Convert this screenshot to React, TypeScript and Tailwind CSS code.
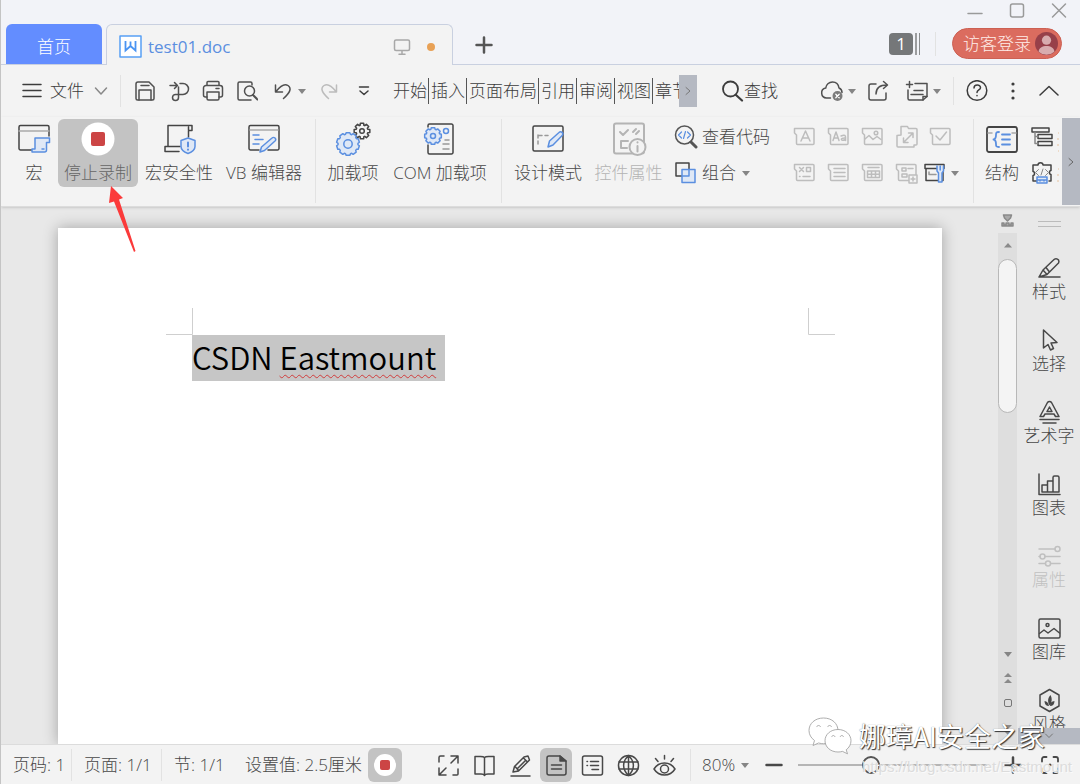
import React, { useState } from "react";

type IconProps = {
  w?: number;
  h?: number;
  className?: string;
  children: React.ReactNode;
};

const Icon: React.FC<IconProps> = ({ w = 22, h = 22, className = "", children }) => (
  <svg
    width={w}
    height={h}
    viewBox={`0 0 ${w} ${h}`}
    fill="none"
    stroke="currentColor"
    strokeWidth={1.5}
    strokeLinecap="round"
    strokeLinejoin="round"
    className={`shrink-0 ${className}`}
    aria-hidden="true"
  >
    {children}
  </svg>
);

const BLUE = "#5b8fe0";
const PALE = "#dfe8f6";

// closed gear outline with rounded teeth
function gearPath(cx: number, cy: number, outer: number, inner: number, teeth: number) {
  const points: string[] = [];
  const step = (Math.PI * 2) / teeth;
  for (let i = 0; i < teeth; i++) {
    const a = i * step - Math.PI / 2;
    [
      [-0.26, outer],
      [0.26, outer],
      [0.4, inner],
      [0.6, inner],
    ].forEach(([k, r]) => {
      const x = cx + Math.cos(a + step * k) * r;
      const y = cy + Math.sin(a + step * k) * r;
      points.push(`${x.toFixed(2)} ${y.toFixed(2)}`);
    });
  }
  return `M${points.join("L")}Z`;
}

const Caret = () => (
  <svg width="8" height="5" viewBox="0 0 8 5" className="shrink-0" aria-hidden="true">
    <path d="M0 0h8L4 5z" fill="#858585" />
  </svg>
);

const Divider = ({ className = "" }: { className?: string }) => (
  <span className={`w-px shrink-0 bg-[#e2e2e2] ${className}`} />
);

/* ---------- title bar ---------- */

const TitleBar = () => (
  <header className="flex h-[65px] shrink-0 bg-[#f2f3f8]">
    <div className="flex w-[105px] shrink-0 border-b border-[#c9d0e0] pt-6 pr-1 pl-[5px]">
      <button className="flex-1 rounded-t-md bg-[#638dff] pt-[6px] text-white">首页</button>
    </div>
    <div className="mt-6 flex w-[347px] shrink-0 items-center rounded-t-md border-x border-t border-[#c9d0e0] bg-[#f3f3f3] pt-[3px] pr-4 pl-3 text-[#5b8fe0]">
      <Icon w={24} h={24}>
        <rect x="1" y="1" width="21" height="21" fill="#fff" stroke="#58a0f5" />
        <path d="M6.500 6V15.500l5-4.500 5 4.500V6M11.500 6.500v4.500" stroke="#4a94f2" strokeWidth="1.800" strokeLinejoin="miter" strokeLinecap="butt" />
      </Icon>
      <span className="ml-[5px] flex-1 font-normal">test01.doc</span>
      <Icon w={18} h={18} className="mr-4 text-[#a8a8a8]">
        <rect x="1.500" y="2" width="15" height="10.500" rx="1.500" />
        <path d="M9 13v3M6 16.300h6" />
      </Icon>
      <span className="mr-[1px] size-2 rounded-full bg-[#e8a155]" />
    </div>
    <div className="flex min-w-0 flex-1 flex-col border-b border-[#c9d0e0] text-[#9a9a9a]">
      <div className="flex h-[22px] justify-end">
        <button className="flex w-[42px] justify-center" aria-label="最小化">
          <Icon w={16}>
            <path d="M1 13.500h14" />
          </Icon>
        </button>
        <button className="flex w-[42px] justify-center" aria-label="最大化">
          <Icon w={16}>
            <rect x="1.500" y="4" width="13" height="13" rx="2" />
          </Icon>
        </button>
        <button className="flex w-[42px] justify-center" aria-label="关闭">
          <Icon w={16}>
            <path d="M1.500 4l13 13M14.500 4l-13 13" />
          </Icon>
        </button>
      </div>
      <div className="flex flex-1 items-center pt-px pr-[18px] pl-[22px]">
        <button className="text-[#555]" aria-label="新建标签">
          <Icon w={18} h={20}>
            <path d="M1.500 11h15M9 3.500v15" strokeWidth="2.500" />
          </Icon>
        </button>
        <button className="ml-auto flex items-center gap-[2px]" aria-label="窗口 1">
          <span className="flex h-[22px] w-6 items-center justify-center rounded bg-[#757779] font-normal text-white">1</span>
          <span className="h-[22px] w-[2px] bg-[#9b9c9e]" />
          <span className="h-[22px] w-px bg-[#8a8c8e]" />
        </button>
        <Divider className="mr-4 ml-[15px] h-6" />
        <button className="flex h-[31px] items-center gap-1 rounded-full border border-[#cc6053] bg-[#db6c5f] pr-[3px] pl-[10px] text-[#ffeeea]">
          访客登录
          <svg width="23" height="23" viewBox="0 0 24 24" aria-hidden="true">
            <circle cx="12" cy="12" r="12" fill="#974049" />
            <circle cx="12" cy="8.500" r="4.800" fill="#d8acae" />
            <path d="M3.800 20.500c0-8 16.400-8 16.400 0A12 12 0 0 1 3.800 20.500z" fill="#d8acae" />
          </svg>
        </button>
      </div>
    </div>
  </header>
);

/* ---------- menu bar ---------- */

const quickTools = [
  {
    label: "保存",
    icon: (
      <>
        <path d="M4 2h11l5 5v11.500a1.500 1.500 0 0 1-1.500 1.500H3.500A1.500 1.500 0 0 1 2 18.500V4a2 2 0 0 1 2-2z" />
        <path d="M5 20V10h12v10M7 5.500h8" />
      </>
    ),
  },
  {
    label: "输出为PDF",
    icon: (
      <>
        <path d="M2 5.500h7M6.500 2.500l3 3-3 3" />
        <path d="M12 3.500h3a5 5 0 0 1 0 11H7.500a3 3 0 1 0 3 3V7" />
      </>
    ),
  },
  {
    label: "打印",
    icon: (
      <>
        <path d="M5 5V2.500a1 1 0 0 1 1-1h10a1 1 0 0 1 1 1V5M5 17H3.500A2 2 0 0 1 1.500 15V8a2.500 2.500 0 0 1 2.500-2.500h14A2.500 2.500 0 0 1 20.500 8v7a2 2 0 0 1-2 2H17" />
        <path d="M5 12h12v6.500a1.500 1.500 0 0 1-1.500 1.500h-9A1.500 1.500 0 0 1 5 18.500zM14 8.500h3" />
      </>
    ),
  },
  {
    label: "打印预览",
    icon: (
      <>
        <path d="M15 20H3.500A1.500 1.500 0 0 1 2 18.500v-15A1.500 1.500 0 0 1 3.500 2h11A1.500 1.500 0 0 1 16 3.500V5" />
        <circle cx="13.500" cy="11" r="5" />
        <path d="M17 15l4.500 4.500" strokeWidth="2" />
      </>
    ),
  },
];

const menuTabs = ["开始", "插入", "页面布局", "引用", "审阅", "视图", "章节"];

const MenuBar = () => (
  <div className="flex h-[52px] shrink-0 items-center bg-[#f3f3f3] pr-[13px] pl-[21px] text-[#3c3c3c]">
    <button className="flex items-center">
      <Icon w={20}>
        <path d="M1 4.500h18M1 10.500h18M1 16.500h18" />
      </Icon>
      <span className="mr-[10px] ml-2">文件</span>
      <Icon w={14} h={10} className="text-[#888]">
        <path d="M1.500 2L7 8l5.500-6" />
      </Icon>
    </button>
    <Divider className="mr-[7px] ml-3 h-8" />
    {quickTools.map((tool) => (
      <button key={tool.label} aria-label={tool.label} className="flex w-[34px] shrink-0 justify-center text-[#505050]">
        <Icon>{tool.icon}</Icon>
      </button>
    ))}
    <button aria-label="撤销" className="flex w-12 shrink-0 items-center justify-end gap-[5px] pr-[6px] text-[#505050]">
      <Icon w={20}>
        <path d="M2.500 5v7h7M3 11.500C8 5 12 3.500 15 5.500c4 3 2 7-4.500 13" />
      </Icon>
      <Caret />
    </button>
    <button aria-label="恢复" className="flex w-[33px] shrink-0 justify-center text-[#bcbcbc]">
      <Icon w={20}>
        <path d="M17.500 5v7h-7M17 11.500C12 5 8 3.500 5 5.500c-4 3-2 7 4.500 13" />
      </Icon>
    </button>
    <button aria-label="自定义快速访问" className="flex w-[38px] shrink-0 justify-center">
      <Icon w={12} h={12}>
        <path d="M1.500 2h9M2 6l4 3.500L10 6" />
      </Icon>
    </button>
    <nav className="ml-[10px] flex w-[286px] shrink-0 overflow-hidden">
      {menuTabs.map((tab) => (
        <button key={tab} className="mr-[2px] h-[26px] shrink-0 border-r border-[#555] pr-px leading-[26px]">
          {tab}
        </button>
      ))}
    </nav>
    <button aria-label="更多选项卡" className="flex h-8 w-[18px] shrink-0 items-center justify-center bg-[#b5b9c2] text-[#777]">
      <Icon w={6} h={10}>
        <path d="M1 1.500L5 5 1 8.500" strokeWidth="1" />
      </Icon>
    </button>
    <button className="ml-6 flex items-center whitespace-nowrap">
      <Icon w={23}>
        <circle cx="9.500" cy="9" r="7.500" strokeWidth="1.800" />
        <path d="M15 15l6 5.500" strokeWidth="2.200" />
      </Icon>
      查找
    </button>

    <div className="ml-auto flex items-center">
      <button aria-label="云同步" className="flex w-[46px] items-center gap-1 text-[#505050]">
        <Icon w={24}>
          <path d="M10.500 18H6.500a5 5 0 0 1-.8-9.900C6 4.500 9 2 12.500 2s6 2.500 6.500 6c2 .8 3 2.500 3 4.500" />
          <circle cx="17.500" cy="16" r="5" fill="#7c7c7c" stroke="none" />
          <path d="M15.800 14.300l3.400 3.400M19.200 14.300l-3.400 3.400" stroke="#fff" strokeWidth="1.300" />
        </Icon>
        <Caret />
      </button>
      <button aria-label="分享" className="mr-[7px] flex w-6 justify-center text-[#505050]">
        <Icon>
          <path d="M9 4H4a2 2 0 0 0-2 2v12a2 2 0 0 0 2 2h13a2 2 0 0 0 2-2v-5" />
          <path d="M9 14c0-6 4-9 11-9M16.500 1.500L20.500 5l-4 3.500" />
        </Icon>
      </button>
      <button aria-label="批注" className="mr-3 flex w-[44px] items-center justify-end gap-1 text-[#505050]">
        <Icon w={24}>
          <path d="M10 3.500h12v13L18 20H4.500A1.500 1.500 0 0 1 3 18.500V10" />
          <path d="M1.500 4.500h6M4.500 1.500v6M9 10.500h9M6 14.500h12M18 20v-3.500h4" />
        </Icon>
        <Caret />
      </button>
      <Divider className="mr-[5px] h-7" />
      <button aria-label="帮助" className="flex w-9 justify-center">
        <Icon w={22}>
          <circle cx="11" cy="10.500" r="9.800" />
          <path d="M8 8c0-4 6.500-4 6.500-.3 0 2.300-3.500 2.300-3.500 4.800M11 15.500v.3" />
        </Icon>
      </button>
      <button aria-label="更多" className="flex w-9 justify-center">
        <Icon w={6}>
          <g fill="currentColor" stroke="none">
            <circle cx="3" cy="4" r="1.600" />
            <circle cx="3" cy="11" r="1.600" />
            <circle cx="3" cy="18" r="1.600" />
          </g>
        </Icon>
      </button>
      <button aria-label="折叠功能区" className="flex w-9 justify-center">
        <Icon w={20} h={12}>
          <path d="M1 10L10 1.500l9 8.500" />
        </Icon>
      </button>
    </div>
  </div>
);

/* ---------- ribbon ---------- */

type RibbonButtonProps = {
  label: string;
  className: string;
  disabled?: boolean;
  children: React.ReactNode;
};

const RibbonButton: React.FC<RibbonButtonProps> = ({ label, className, disabled, children }) => (
  <button
    disabled={disabled}
    className={`flex h-[68px] shrink-0 flex-col items-center gap-1 rounded-md pt-[3px] leading-[26px] whitespace-nowrap ${className}`}
  >
    <Icon w={36} h={34}>{children}</Icon>
    {label}
  </button>
);

// note-shaped control outline shared by the form icons
const controlFrame = "M1.500 2.500h18.500a1 1 0 0 1 1 1v14a1 1 0 0 1-1 1H4.500a1 1 0 0 1-1-1V9L1.500 7z";

const formControls = [
  [
    { label: "文本框", art: <path d="M8 15l4.500-10 4.500 10M9.500 12h6" /> },
    { label: "格式文本", art: <path d="M6 14.500L9 6l3 8.500M7 12h4M14 10c4-2 4.500 0 4.500 1v3.500M18.500 12c-6-.5-5 4 0 1.500" /> },
    { label: "图片", art: <><path d="M4 13l4-3.500 4 4 4-3 4 3" /><circle cx="15" cy="7" r="1.800" /></> },
    {
      label: "缩放",
      frame: "M6 9V.500h6.500l1 2H21a1 1 0 0 1 1 1V18a1 1 0 0 1-1 1h-2v2H3a1 1 0 0 1-1-1V9.500z",
      art: <path d="M9 16L17.500 7.500M13.500 7H18v4.500M8.500 12v4.500H13" />,
    },
    { label: "复选框", art: <path d="M7 10l4 4 6.500-8" /> },
  ],
  [
    { label: "选项", art: <path d="M6.500 5.500l4 4M10.500 5.500l-4 4M13.500 5.500h4v4h-4zM6.500 14.500h.5M10 14.500h7" /> },
    { label: "列表", art: <path d="M7 6.500h11M7 10.500h11M7 14.500h11" /> },
    { label: "表格", art: <path d="M7 5.500h11M6.500 9h12v6.500h-12zM6.500 12.200h12M10.500 9v6.500M14.500 9v6.500" /> },
    { label: "重复内容", art: <><path d="M7 6h4v3H7zM13 6.500h5M7 12h5v3H7z" /><path d="M14 13h8v8h-8zM18 15v4M16 17h4" fill="#f3f3f3" /></> },
  ],
];

const Ribbon = () => (
  <div className="relative z-10 flex h-[90px] shrink-0 border-b border-[#dcdcdc] bg-[#f3f3f3] text-[#484848] shadow-sm">
    <div className="flex min-w-0 flex-1 items-start pt-[2px] pl-[9px]">
      <RibbonButton label="宏" className="w-12">
        <path d="M17 28H4.500A1.500 1.500 0 0 1 3 26.500V5a1.500 1.500 0 0 1 1.500-1.500h27A1.500 1.500 0 0 1 33 5v9" stroke="#444" />
        <path d="M3 9h30" stroke="#aaa" />
        <path d="M19 16h14.500v4.500h-3V28a2 2 0 0 1-2 2H16v-3h3zM26 27h2" stroke={BLUE} fill={PALE} />
      </RibbonButton>
      <RibbonButton label="停止录制" className="w-20 bg-[#c3c3c3] text-[#666]">
        <circle cx="18" cy="17" r="16.500" fill="#fff" stroke="none" />
        <rect x="11" y="10" width="14" height="14" rx="2" fill="#cc4545" stroke="none" />
      </RibbonButton>
      <RibbonButton label="宏安全性" className="w-[82px]">
        <path d="M18 29.500H4V24.500h15M7 24V3.500h24v5h-3.500V15M27.500 8V5" stroke="#444" />
        <path d="M27 16l7 2.500v6c0 3.500-3 5.500-7 7-4-1.500-7-3.500-7-7v-6z" stroke={BLUE} fill={PALE} />
        <path d="M27 20.500v4M27 27.500v.2" stroke={BLUE} strokeWidth="2" />
      </RibbonButton>
      <RibbonButton label="VB 编辑器" className="w-[88px]">
        <path d="M13 28H4.500A1.500 1.500 0 0 1 3 26.500V5a1.500 1.500 0 0 1 1.500-1.500h27A1.500 1.500 0 0 1 33 5v21.500a1.500 1.500 0 0 1-1.500 1.500H22" stroke="#444" />
        <path d="M4 8h28" stroke="#aaa" />
        <path d="M7 13h6M9 17.500h8M7 22h6M14 30l1.500-5L26 16a1.800 1.800 0 0 1 3 3L18.500 28.500z" stroke={BLUE} fill={PALE} />
      </RibbonButton>
      <Divider className="mx-[7px] h-[84px]" />
      <RibbonButton label="加载项" className="w-[60px]">
        <path d={gearPath(27, 9, 8, 6, 8)} stroke="#444" />
        <circle cx="27" cy="9" r="2.300" stroke="#444" />
        <path d={gearPath(13, 22, 11.500, 10, 10)} stroke={BLUE} fill={PALE} />
        <circle cx="13" cy="22" r="4.200" stroke={BLUE} />
      </RibbonButton>
      <RibbonButton label="COM 加载项" className="w-[114px]">
        <path d="M6 5V3.500A1.500 1.500 0 0 1 7.500 2h22A1.500 1.500 0 0 1 31 3.500v27a1.500 1.500 0 0 1-1.500 1.500h-22A1.500 1.500 0 0 1 6 30.500V23" stroke="#444" />
        <path d={gearPath(11, 14, 8.500, 7, 8)} stroke={BLUE} fill={PALE} />
        <circle cx="11" cy="14" r="2.500" stroke={BLUE} />
        <circle cx="24" cy="9" r="2.500" stroke={BLUE} />
        <path d="M23 18h4M21 22h6M21 27h6" stroke="#999" />
      </RibbonButton>
      <Divider className="mx-1 h-[84px]" />
      <RibbonButton label="设计模式" className="w-[84px]">
        <rect x="3" y="4" width="30" height="25" rx="1.500" stroke="#444" />
        <path d="M8 13v12M9 13.500h11" stroke="#999" strokeDasharray="3 3" />
        <path d="M18 25l1.500-6L29 10.500a2 2 0 0 1 3.200 3L23 23z" stroke={BLUE} fill={PALE} />
      </RibbonButton>
      <RibbonButton label="控件属性" disabled className="w-[77px] text-[#b4b4b4]">
        <rect x="3" y="1.500" width="30" height="30" rx="2" strokeWidth="2" />
        <path d="M9 10l3 3 5-5M22 10l3-3M25 12l3-3M17 19h-7v7h6" strokeWidth="2" />
        <circle cx="26.500" cy="25" r="8" fill="#f3f3f3" strokeWidth="2" />
        <path d="M26.500 24v5.500M26.500 20.300v.3" strokeWidth="2" />
      </RibbonButton>

      <div className="ml-[7px] flex shrink-0 flex-col whitespace-nowrap">
        <button className="flex h-9 items-center gap-1">
          <Icon w={24} h={24} className="text-[#555]">
            <circle cx="10.500" cy="10" r="9" />
            <path d="M17 17l5 5" strokeWidth="3" />
            <path d="M7.500 7l-3 3 3 3M13.500 7l3 3-3 3M11.500 6.500l-2 7" stroke={BLUE} strokeWidth="1.200" />
          </Icon>
          查看代码
        </button>
        <button className="flex h-9 items-center gap-1">
          <Icon w={24} h={24} className="text-[#444]">
            <rect x="2" y="2" width="13" height="13" />
            <rect x="8" y="8.500" width="13" height="13" stroke={BLUE} fill={PALE} />
            <path d="M15 8.500V15H8.500" stroke={BLUE} />
          </Icon>
          组合
          <span className="ml-[2px]">
            <Caret />
          </span>
        </button>
      </div>

      <div className="ml-[18px] flex shrink-0 flex-col text-[#bdbdbd]">
        {formControls.map((row, index) => (
          <div key={index} className="flex h-9 items-center">
            {row.map((control) => (
              <button
                key={control.label}
                aria-label={control.label}
                disabled
                className="flex w-[34px] justify-center"
              >
                <Icon w={24} className="overflow-visible">
                  <path d={"frame" in control ? control.frame : controlFrame} />
                  {control.art}
                </Icon>
              </button>
            ))}
            {index === 1 && (
              <button aria-label="旧式工具" className="flex w-[38px] items-center gap-[5px]">
                <Icon w={22} className="text-[#444]">
                  <path d="M1 2.500h19v4H1zM2 7v11.500h17V7" />
                  <path d="M5 10v2.500h7" stroke="#999" />
                  <path d="M13 4v5l1.500 2v9h3.500v-9l1.500-2V4M16.200 4v4" stroke={BLUE} fill={PALE} />
                </Icon>
                <Caret />
              </button>
            )}
          </div>
        ))}
      </div>

      <Divider className="ml-[11px] h-[84px]" />
      <RibbonButton label="结构" className="w-14">
        <rect x="3" y="5" width="30" height="25" rx="2" stroke="#444" strokeWidth="1.800" />
        <path d="M4 11h4M28 11h4" stroke="#aaa" />
        <path d="M15 10c-3 0-3 1-3 3s0 4-2.500 4.500C12 18 12 20 12 22s0 3 3 3M18 12.500h8M18 17.500h8M18 22.500h8" stroke={BLUE} strokeWidth="1.800" />
      </RibbonButton>
      <div className="flex shrink-0 flex-col">
        <button aria-label="XML 映射" className="flex h-9 items-center">
          <Icon w={24} className="text-[#444]">
            <path d="M2 2h17v4H2zM8 8.500h14v4H8zM8 15.500h14v4H8z" />
            <path d="M5 6.500v11h3M5 10.500h3" stroke="#888" />
          </Icon>
        </button>
        <button aria-label="扩展包" className="flex h-9 items-center">
          <Icon w={24} h={24} className="text-[#444]">
            <path d="M7 20H3v-5.500c2 0 2-4 0-4V4h5c0-3 5-3 5 0h8v5.500c-2 0-2 4 0 4V20h-2" />
            <path d="M8.500 8.500l-3 3 3 3M15.500 8.500l3 3-3 3M13 8l-2 6" stroke="#888" strokeWidth="1" />
            <path d="M7 16h10v6H7zM7 19h10M10 19v1M14 19v1" stroke={BLUE} fill={PALE} />
          </Icon>
        </button>
      </div>
      {/* clipped edge of the next labels */}
      <Icon w={5} h={72}>
        <path d="M4 14h1M3 20h2M3 26h2M4 32h1M4 50h1M3 56h2M3 62h2" stroke="#e6c3a0" strokeWidth="1" strokeLinecap="butt" />
      </Icon>
    </div>
    <button aria-label="向右滚动" className="mt-px mb-px flex w-[18px] shrink-0 items-center justify-center bg-[#b5b9c2] text-[#666]">
      <Icon w={6} h={10}>
        <path d="M1 1.500L5 5 1 8.500" strokeWidth="1" />
      </Icon>
    </button>
  </div>
);

/* ---------- workspace ---------- */

const Page = () => (
  <main className="flex min-w-0 flex-1 pt-[21px] pr-14 pl-[57px]">
    <div className="flex-1 bg-white pt-20 pl-[108px] shadow-[0_0_14px_rgba(0,0,0,0.3)]">
      <div className="flex h-[27px] justify-between pr-[107px] text-[#cfcfcf]">
        <Icon w={27} h={27}>
          <path d="M26.500 0v26.500H0" strokeWidth="1" strokeLinecap="butt" />
        </Icon>
        <Icon w={27} h={27}>
          <path d="M0.500 0v26.500H27" strokeWidth="1" strokeLinecap="butt" />
        </Icon>
      </div>
      <p className="ml-[26px] h-[46px] w-fit bg-[#c6c6c6] pr-[9px] font-['Noto_Sans_CJK_SC'] text-[31px] leading-[43px] font-[350] text-black">
        CSDN{" "}
        <span className="underline decoration-[#d03c3c] decoration-wavy decoration-1 underline-offset-4">
          Eastmount
        </span>
      </p>
    </div>
  </main>
);

const ScrollBar = () => (
  <div className="flex w-[19px] shrink-0 flex-col items-center text-[#8a8a8a]">
    <Icon w={13} h={26}>
      <path d="M2.500 8h8l-1 3-3 3-3-3zM1 19v-3h2v2h2v-2h3v2h2v-2h2v3z" fill="#aaa" />
    </Icon>
    <div className="flex w-full min-h-0 flex-1 flex-col items-center bg-[#dedede]">
      <button aria-label="向上滚动" className="flex h-[26px] shrink-0 items-center">
        <Icon w={8} h={8}>
          <path d="M0 5.500L4 1l4 4.500z" fill="currentColor" stroke="none" />
        </Icon>
      </button>
      <div className="h-[154px] w-[19px] shrink-0 rounded-full border border-[#b8b8b8] bg-[#f4f4f4]" />
      <button aria-label="向下滚动" className="mt-auto flex h-6 items-center">
        <Caret />
      </button>
      <button aria-label="上一页" className="flex h-6 items-center">
        <Icon w={8} h={12}>
          <path d="M0 5l4-4 4 4zM0 11l4-4 4 4z" fill="currentColor" stroke="none" />
        </Icon>
      </button>
      <button aria-label="浏览对象" className="flex h-[26px] items-center">
        <span className="size-2 rounded-xs border border-[#777]" />
      </button>
      <button aria-label="下一页" className="flex h-7 items-start pt-2">
        <Icon w={8} h={12}>
          <path d="M0 1l4 4 4-4zM0 7l4 4 4-4z" fill="currentColor" stroke="none" />
        </Icon>
      </button>
    </div>
  </div>
);

const sideItems = [
  {
    label: "样式",
    icon: <path d="M2 21h21M2 21l4-7L16.500 4a3 3 0 0 1 5 0 3 3 0 0 1 0 3L10 18.500 2 21M6 14l4 4.500M9 11.500l3.500 4.500" />,
  },
  {
    label: "选择",
    icon: <path d="M6.500 2v18l4.500-3.500 2.500 5.500 3-1.500-2.500-5.500 6-.5z" />,
  },
  {
    label: "艺术字",
    icon: (
      <>
        <path d="M3 16.500L10.500 2.500c1-1.500 3-1.500 4 0L22 16.500h-3.500L17 14H8l-1.500 2.500z" />
        <path d="M12.500 7l-2.500 4.500h5zM3 19.500h19M6 23h13" />
      </>
    ),
  },
  {
    label: "图表",
    icon: <path d="M2 2v20.500h21M5 20v-7h5.500v7zM10.500 20V9H16v11zM16 20V5.500a1.500 1.500 0 0 1 1.500-1.500h3A1.500 1.500 0 0 1 22 5.500V20z" />,
  },
  {
    label: "属性",
    disabled: true,
    icon: (
      <>
        <path d="M2 5h16M8 12.500h15M2 19.500h6M14 19.500h9M2 12.500h1" />
        <circle cx="20.500" cy="5" r="2.500" />
        <circle cx="5.500" cy="12.500" r="2.500" />
        <circle cx="11" cy="19.500" r="2.500" />
      </>
    ),
  },
  {
    label: "图库",
    icon: (
      <>
        <rect x="2" y="3" width="21" height="19" rx="1.500" />
        <path d="M2.500 17.500l4.500-3.500 4 3 6-4.500 5.500 4.500" />
        <circle cx="10.500" cy="9" r="1.500" />
      </>
    ),
  },
  {
    label: "风格",
    icon: (
      <>
        <path d="M12.500 1.500L22 7v11l-9.500 5.500L3 18V7z" />
        <path d="M12.500 17.500c-2-4-2-7 1-10.500 2 4 1.500 7-1 10.500zM12 18c-3 0-4.500-2-4.500-5 2.500.5 4 2 4.500 5zM13 18c0-3 1.500-4.500 4.500-5 0 3-1.500 5-4.500 5z" fill="currentColor" stroke="none" />
      </>
    ),
  },
];

const SidePanel = () => (
  <aside className="flex w-[63px] shrink-0 flex-col overflow-hidden pl-px text-[#484848]">
    <div className="flex h-11 shrink-0 flex-col items-center gap-1 pt-[14px]">
      <span className="h-px w-[23px] bg-[#bbb]" />
      <span className="h-px w-[23px] bg-[#bbb]" />
    </div>
    <div className="flex min-h-0 flex-1 flex-col gap-[18px] overflow-hidden pt-[5px]">
      {sideItems.map((item) => (
        <button
          key={item.label}
          disabled={item.disabled}
          className={`flex h-[54px] shrink-0 flex-col items-center leading-[22px] ${item.disabled ? "text-[#c0c0c0]" : ""}`}
        >
          <Icon w={25} h={25}>{item.icon}</Icon>
          {item.label}
        </button>
      ))}
    </div>
    <button aria-label="展开更多" className="flex h-4 shrink-0 items-center justify-center bg-[#b5b9c2] text-[#777]">
      <Icon w={10} h={6}>
        <path d="M1.500 1L5 4.500 8.500 1" strokeWidth="1" />
      </Icon>
    </button>
  </aside>
);

/* ---------- status bar ---------- */

const viewModes = [
  { label: "全屏", icon: <path d="M2 8V3.500A1.500 1.500 0 0 1 3.500 2H7M14 2h7v7M21 2l-7 7M21 15v5a1 1 0 0 1-1 1h-4M9 21H2v-7M2 21l7-7" /> },
  { label: "阅读版式", icon: <path d="M11.500 3.500v18M11.500 3.500c-1-1-2-1-4-1H2v17.500h6c2 0 3 0 3.500 1.500.5-1.500 1.500-1.500 3.500-1.500h6V2.500h-5.500c-2 0-3 0-4 1z" /> },
  { label: "写作模式", icon: <path d="M2 22h19M4 18l1.500-5.500L15 3l4-1 1.500 4L9.500 17zM6.500 13l3 3.500M14.500 4l3.500 3.500M8.500 14.500l8-8" /> },
  { label: "页面视图", icon: <><path d="M15 2H4a2 2 0 0 0-2 2v15a2 2 0 0 0 2 2h15a2 2 0 0 0 2-2V7zM6.500 11h10M6.500 15h10" /><path d="M15 2v5h6z" fill="currentColor" /></> },
  { label: "大纲", icon: <><rect x="1.500" y="2" width="20" height="19" rx="2" /><path d="M6 7.500h.500M9.500 7.500h8M6 11.500h.500M9.500 11.500h8M11 15.500h6.500" /></> },
  { label: "Web 版式", icon: <><circle cx="11.500" cy="11.500" r="10" /><path d="M11.500 1.500c-6.500 6-6.500 14 0 20 6.500-6 6.500-14 0-20zM11.500 1.500v20M2 8h19M2 15h19" /></> },
  { label: "护眼模式", icon: <><path d="M1 15c5-8 16-8 21 0-5 8-16 8-21 0zM11.500 1.500v3.500M2.500 4.500l2.500 3M20.500 4.500l-2.500 3" /><circle cx="11.500" cy="15" r="4" /></> },
];

const StatusBar = () => {
  const [zoom, setZoom] = useState(80);

  return (
    <footer className="flex h-10 shrink-0 items-center border-t border-[#dcdcdc] bg-[#f3f3f3] pt-px pr-[20px] text-[#484848] whitespace-nowrap">
      <span className="w-[70px] pl-3">页码: 1</span>
      <Divider className="h-8" />
      <span className="w-[89px] pl-3">页面: 1/1</span>
      <Divider className="h-8" />
      <span className="w-[70px] pl-3">节: 1/1</span>
      <span className="w-[136px] pl-[13px]">设置值: 2.5厘米</span>
      <button aria-label="停止录制宏" className="flex size-[34px] shrink-0 items-center justify-center rounded-md bg-[#c3c3c3]">
        <span className="flex size-[22px] items-center justify-center rounded-full bg-white">
          <span className="size-[10px] rounded-xs bg-[#cc4545]" />
        </span>
      </button>
      <div className="ml-7 flex shrink-0">
        {viewModes.map((mode) => (
          <button
            key={mode.label}
            aria-label={mode.label}
            className={`mx-[2px] flex h-[34px] w-8 items-center justify-center rounded-md ${mode.label === "页面视图" ? "bg-[#c3c3c3]" : ""}`}
          >
            <Icon w={23} h={23}>{mode.icon}</Icon>
          </button>
        ))}
      </div>
      <Divider className="mr-[11px] ml-2 h-8" />
      <button className="flex items-center gap-[6px]">
        {zoom}%
        <Caret />
      </button>
      <button aria-label="缩小" className="ml-4" onClick={() => setZoom(Math.max(10, zoom - 10))}>
        <Icon w={18} h={18}>
          <path d="M1.500 9h15" strokeWidth="2.500" />
        </Icon>
      </button>
      <input
        type="range"
        aria-label="缩放比例"
        min={10}
        max={200}
        value={zoom}
        onChange={(e) => setZoom(Number(e.target.value))}
        className="mx-[15px] h-[18px] min-w-0 flex-1 appearance-none bg-transparent [&::-webkit-slider-runnable-track]:h-[2px] [&::-webkit-slider-runnable-track]:bg-[#b5b5b5] [&::-webkit-slider-thumb]:-mt-2 [&::-webkit-slider-thumb]:size-[18px] [&::-webkit-slider-thumb]:appearance-none [&::-webkit-slider-thumb]:rounded-full [&::-webkit-slider-thumb]:border-2 [&::-webkit-slider-thumb]:border-[#555] [&::-webkit-slider-thumb]:bg-[#f3f3f3]"
      />
      <button aria-label="放大" className="mr-[18px]" onClick={() => setZoom(Math.min(200, zoom + 10))}>
        <Icon w={18} h={18}>
          <path d="M1.500 9h15M9 1.500v15" strokeWidth="2.500" />
        </Icon>
      </button>
      <button aria-label="适合窗口">
        <Icon w={20} h={20}>
          <path d="M2 6.500V4a2 2 0 0 1 2-2h2.500M13.500 2H16a2 2 0 0 1 2 2v2.500M18 13.500V16a2 2 0 0 1-2 2h-2.500M6.500 18H4a2 2 0 0 1-2-2v-2.500" strokeWidth="1.800" />
          <circle cx="10" cy="10" r="1.500" fill="currentColor" stroke="none" />
        </Icon>
      </button>
    </footer>
  );
};

/* ---------- overlays ---------- */

const PointerArrow = () => (
  <svg width="30" height="68" viewBox="0 0 30 68" className="pointer-events-none absolute top-[186px] left-[105px] z-20" aria-hidden="true">
    <path d="M5 0l12 12-4 1.500L29.500 65 28 66 8 15.500 3 17z" fill="#fb3a3a" />
  </svg>
);

const Watermark = () => (
  <div className="pointer-events-none absolute right-2 bottom-[7px] z-20 flex flex-col items-end gap-[2px] font-['Noto_Sans_CJK_SC'] font-normal">
    <div className="mr-[27px] flex items-center gap-[7px]">
      <svg width="44" height="38" viewBox="0 0 44 38" fill="#fff" stroke="#999" strokeWidth="0.8" aria-hidden="true">
        <path d="M15.500 1C7 1 1 6.500 1 13.500c0 4 2 7.500 5.500 10L5 28.500l5.500-2.500c2 .5 3.500.7 5 .7C24 26.700 30 21 30 13.700 30 6.500 24 1 15.500 1z" />
        <path d="M30 12.500c-7.500 0-13 5-13 11.200S22.500 35 30 35c1.500 0 3-.2 4.500-.6l5 2.400-1.300-4c3-2.200 4.800-5.400 4.800-9.100 0-6.200-5.500-11.200-13-11.200z" />
        <path d="M8.500 10c1-2 3.500-2 4 0M19.500 10c1-2 3.500-2 4 0M23.500 20c1-2 3-2 3.500 0M32 20c1-2 3-2 3.500 0" fill="none" />
      </svg>
      <span className="text-[27px] leading-[34px] text-white [text-shadow:1px_1px_1px_#333,0_0_1px_#777]">娜璋AI安全之家</span>
    </div>
    <span className="font-['Liberation_Sans'] text-[15px] leading-5 text-[#dcdcdc] [text-shadow:1px_1px_0_#fafafa]">
      https://blog.csdn.net/Eastmount
    </span>
  </div>
);

export default function App() {
  return (
    <div className="relative flex h-screen flex-col overflow-hidden border-l border-[#c4c4c4] bg-[#e8e8e8] font-['Open_Sans','Noto_Sans_CJK_SC',sans-serif] text-[17px] leading-6 font-light">
      <TitleBar />
      <MenuBar />
      <Ribbon />
      <div className="flex min-h-0 flex-1">
        <Page />
        <ScrollBar />
        <SidePanel />
      </div>
      <StatusBar />
      <PointerArrow />
      <Watermark />
    </div>
  );
}
